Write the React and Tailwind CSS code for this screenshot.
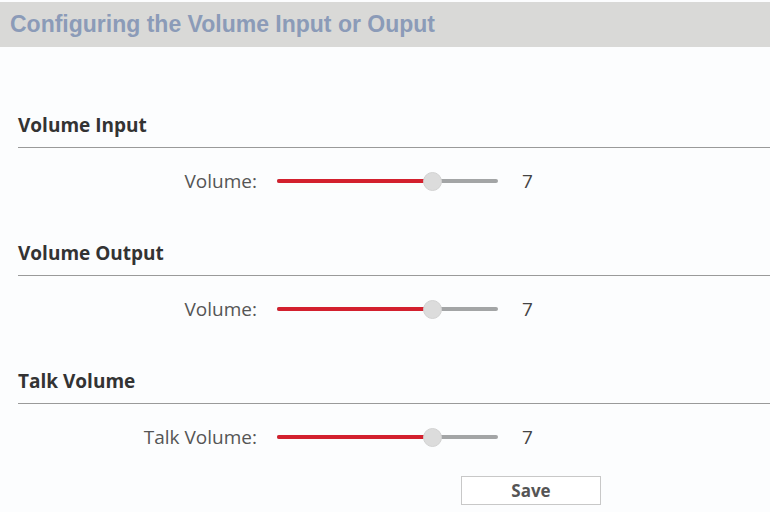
import React from 'react';

function VolumeSlider({ value, max = 10 }) {
    const pct = (value / max) * 100;
    return (
        <div className="relative w-[221px] h-[18px] flex items-center">
            <div className="w-full h-[4px] rounded-full bg-[#a3a5a6]" />
            <div className="absolute left-0 h-[4px] rounded-full bg-[#d3202e]" style={{ width: `${pct}%` }} />
            <div
                className="absolute w-[19px] h-[19px] rounded-full bg-[#dcdcdc] border border-[#d2d2d2]"
                style={{ left: `calc(${pct}% - 9px)` }}
            />
        </div>
    );
}

function Section({ title, label, value }) {
    return (
        <div>
            <div className="ml-[18px] border-b border-[#9a9a9a] pb-[9px] text-[19px] font-bold text-[#333] leading-[26px]">
                {title}
            </div>
            <div className="flex items-center h-[66px]">
                <div className="w-[257px] text-right text-[19px] text-[#555]">{label}</div>
                <div className="ml-[20px]">
                    <VolumeSlider value={7} />
                </div>
                <div className="ml-[24px] text-[19px] text-[#444]">{value}</div>
            </div>
        </div>
    );
}

export default function App() {
    return (
        <div className="w-[770px] h-[512px] bg-[#fcfdfe] overflow-hidden" style={{ fontFamily: '"Open Sans", "Noto Sans", sans-serif' }}>
            <div className="mt-[2px] h-[45px] bg-[#d9d9d7] flex items-center pl-[10px]">
                <h1 className="text-[23px] font-bold text-[#8b9bb8]" style={{ fontFamily: '"Liberation Sans", Arial, sans-serif' }}>
                    Configuring the Volume Input or Ouput
                </h1>
            </div>
            <div className="pt-[65px] flex flex-col gap-[26px]">
                <Section title="Volume Input" label="Volume:" value="7" />
                <Section title="Volume Output" label="Volume:" value="7" />
                <Section title="Talk Volume" label="Talk Volume:" value="7" />
            </div>
            <div className="flex mt-[6px]">
                <button className="ml-[461px] w-[140px] h-[29px] border border-[#c8c8c8] bg-white text-[17px] font-bold text-[#555] leading-none">
                    Save
                </button>
            </div>
        </div>
    );
}
